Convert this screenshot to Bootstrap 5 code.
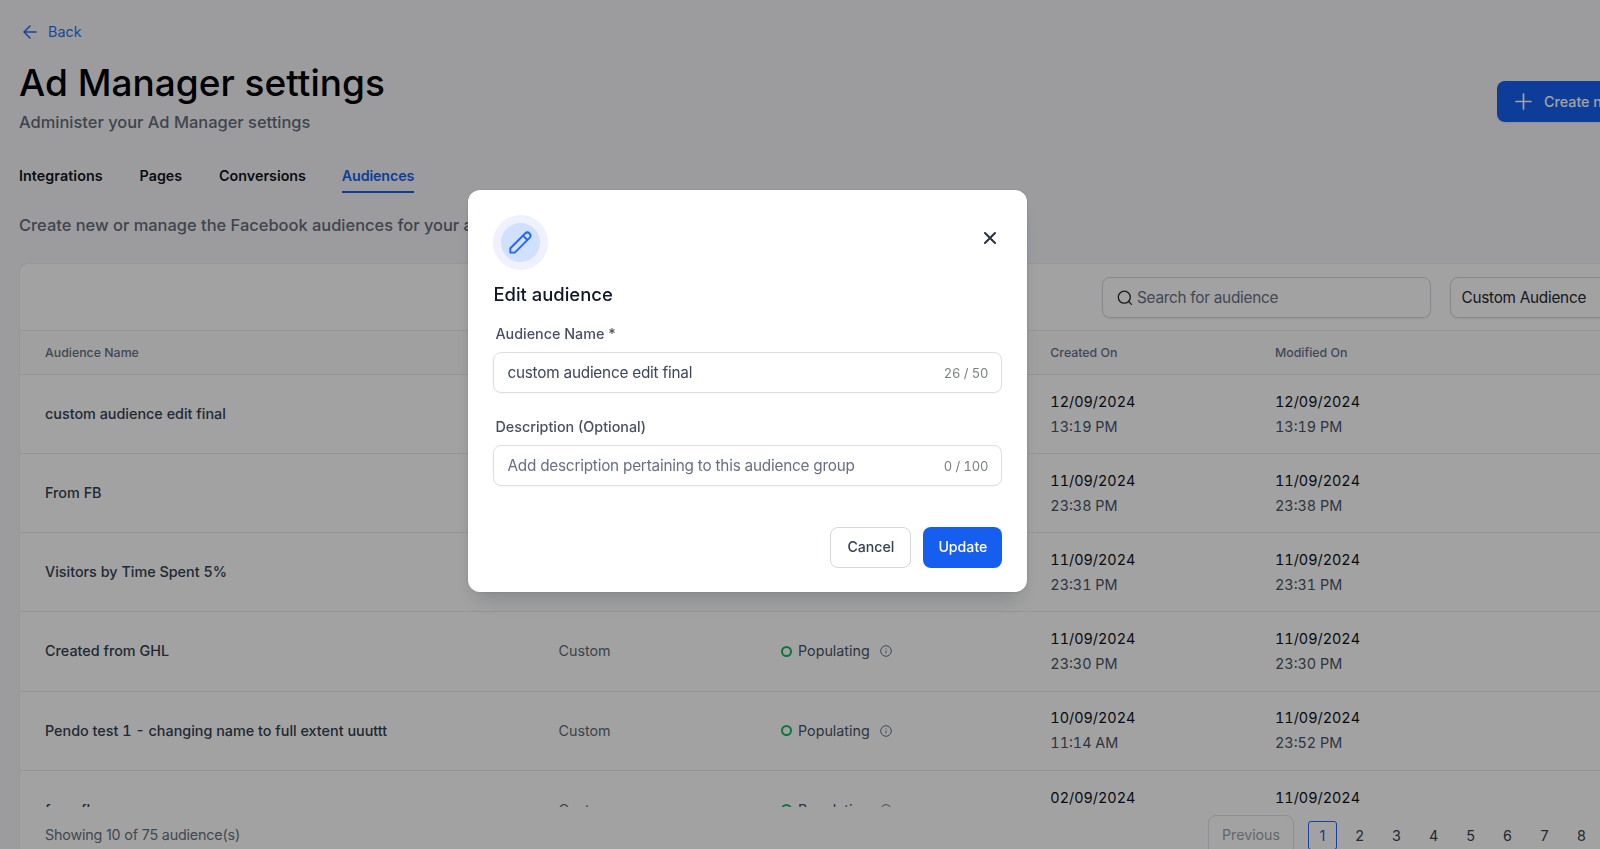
<!DOCTYPE html>
<html lang="en">
<head>
<meta charset="utf-8">
<meta name="viewport" content="width=device-width, initial-scale=1">
<title>Ad Manager settings</title>
<link rel="stylesheet" href="https://cdn.jsdelivr.net/npm/bootstrap@5.3.0/dist/css/bootstrap.min.css">
<style>
  :root { --line: #e9eaec; }
  body { font-family: Inter, "Liberation Sans", sans-serif; font-size: 14.3px; line-height: 20px; background: #f4f5f8; color: #344054; height: 849px; overflow: hidden; }
  .viewport { width: 100%; height: 849px; overflow: hidden; }
  .page { width: 1760px; height: 849px; padding-left: 19px; overflow: hidden; }
  .back-link { font-size: 14.35px; color: #2b6fef; margin-top: 22px; padding-left: 3.5px; gap: 11.5px; }
  .page-title { font-size: 37px; font-weight: 500; line-height: 46px; color: #000; margin: 18px 0 0; }
  .page-sub { font-size: 16.45px; font-weight: 500; line-height: 26px; color: #636b79; margin-top: 3px; }
  .btn-create { background: #155eef; color: #fff; border: 0; border-radius: 8px; height: 41px; padding: 0 18px; gap: 12px; font-size: 14.3px; font-weight: 500; box-shadow: 0 1px 2px rgba(16,24,40,.08); }
  .tab-row { gap: 36.9px; margin-top: 24px; height: 34px; }
  .tab-row .nav-link { padding: 0; height: 34px; line-height: 34px; font-size: 14.3px; font-weight: 600; color: #10151f; }
  .tab-row .nav-link:first-child { letter-spacing: .07px; }
  .tab-row .nav-link.active { color: #155eef; border-bottom: 2px solid #155eef; letter-spacing: -.15px; margin-left: -1px; }
  .intro { margin-top: 19px; }
  .list-card { margin: 26px 0 0 1px; border-radius: 8px 8px 0 0; background: #fefefe; border: 0; height: 600px; box-shadow: 0 0 2px rgba(16,24,40,.14); }
  .filters { height: 67px; padding-left: 1082px; gap: 18.5px; border-bottom: 1px solid var(--line); flex: none; }
  .field { border: 1px solid #d5d7db; border-radius: 8px; height: 41px; background: #fefefe; font-size: 15.3px; letter-spacing: -.25px; padding: 1px 14px 0; box-shadow: 0 1px 2px rgba(16,24,40,.08); }
  .field-search { width: 329px; gap: 4px; color: #667085; }
  .field-select { width: 240px; padding-left: 11px; color: #26282c; }
  .grid-row { display: grid; grid-template-columns: 513.5px 222.5px 269.3px 224.7px 1fr; padding-left: 25px; align-items: center; height: 79.15px; border-bottom: 1px solid var(--line); font-variant-numeric: tabular-nums; }
  .grid-head { height: 44px; font-size: 12.35px; font-weight: 500; color: #667085; background: #fbfbfc; flex: none; }
  .rows { height: 431.5px; overflow: hidden; flex: none; }
  .name { font-weight: 500; font-size: 14.37px; color: #344054; }
  .kind { color: #60697a; }
  .state { color: #475467; gap: 6px; }
  .ring { width: 11px; height: 11px; border: 2.6px solid #16b85c; border-radius: 50%; }
  .stamp { line-height: 24.7px; font-size: 14.4px; color: #475467; padding-top: 1px; }
  .stamp b { display: block; font-weight: 400; color: #0c111b; }
  .foot { padding-left: 25px; height: 60px; flex: none; margin-top: -1.5px; }
  .foot-count { width: 1163px; font-size: 14.3px; letter-spacing: -.17px; color: #667085; }
  .btn-prev { width: 86px; height: 41px; border: 1px solid #e0e2e6; border-radius: 8px; font-size: 14.2px; color: #9aa1ad; padding: 0; box-shadow: 0 1px 2px rgba(16,24,40,.06); background: none; margin-right: 14px; }
  .pg { width: 29px; height: 29px; line-height: 27px; border-radius: 3px; border: 1px solid transparent; margin-right: 8px; padding: 0; background: none; color: #344054; text-align: center; }
  .pg.active { border: 1.5px solid #2466f0; color: #155eef; }
  .shade { position: fixed; inset: 0; background: rgba(0,0,0,.36); }
  .edit-box { position: fixed; left: 468.4px; top: 190px; width: 559px; height: 402.4px; border-radius: 12px; background: #fff; padding: 24.5px 25px; box-shadow: 0 14px 22px -8px rgba(16,24,40,.2), 0 0 3px rgba(0,0,0,.15); }
  .badge-ring { width: 55px; height: 55px; border-radius: 50%; border: 8px solid #eff2fe; background: #d1e0fe; }
  .close-x { margin: 17px 6px 0 0; }
  .edit-title { font-size: 18.45px; font-weight: 500; line-height: 28px; color: #101828; margin: 10px 0 0; }
  .lbl { font-size: 14.35px; font-weight: 500; line-height: 20px; color: #475063; padding-left: 2px; margin-bottom: 8px; }
  .inp { border: 1px solid #dcdee2; border-radius: 8px; height: 41px; padding: 1px 13px 0; font-size: 15.3px; letter-spacing: -.21px; color: #3c4658; box-shadow: 0 1px 2px rgba(16,24,40,.03); }
  .count { font-size: 13px; letter-spacing: -.1px; color: #7d8083; font-variant-numeric: tabular-nums; }
  .btn-box { height: 41px; border-radius: 8px; font-size: 14.15px; font-weight: 500; padding: 0; }
</style>
</head>
<body>
<div class="viewport">
<div class="page">
  <div class="d-flex">
    <div style="width: 1478px">
      <div class="d-flex align-items-center back-link">
        <svg width="14" height="14" viewBox="0 0 14 14" fill="none" stroke="currentColor" stroke-width="1.6" stroke-linecap="round" stroke-linejoin="round"><path d="M13 7H1M7 1 1 7l6 6"/></svg>Back</div>
      <h1 class="page-title">Ad Manager settings</h1>
      <div class="page-sub">Administer your Ad Manager settings</div>
    </div>
    <div class="align-self-end mb-2 pb-1">
      <button class="btn btn-create d-flex align-items-center text-nowrap" style="margin-bottom: 1px">
        <svg width="17" height="17" viewBox="0 0 17 17" fill="none" stroke="currentColor" stroke-width="1.7" stroke-linecap="round"><path d="M8.5 1v15M1 8.5h15"/></svg>Create new audience</button>
    </div>
  </div>
  <nav class="nav tab-row">
    <a class="nav-link">Integrations</a><a class="nav-link">Pages</a><a class="nav-link">Conversions</a><a class="nav-link active">Audiences</a>
  </nav>
  <div class="page-sub intro">Create new or manage the Facebook audiences for your ads</div>

  <div class="card list-card">
    <div class="d-flex align-items-center filters">
      <div class="field field-search d-flex align-items-center">
        <svg width="16" height="16" viewBox="0 0 16 16" fill="none" stroke="#26282c" stroke-width="1.3" stroke-linecap="round"><circle cx="7.3" cy="7.2" r="6"/><path d="m11.6 11.5 2.9 2.9"/></svg>Search for audience</div>
      <div class="field field-select d-flex align-items-center">Custom Audience</div>
    </div>
    <div class="grid-row grid-head"><span>Audience Name</span><span>Type</span><span>Status</span><span>Created On</span><span>Modified On</span></div>
    <div class="rows" id="rows"></div>
    <div class="d-flex align-items-center foot">
      <span class="foot-count">Showing 10 of 75 audience(s)</span>
      <button class="btn btn-prev">Previous</button>
      <span class="pg active">1</span><span class="pg">2</span><span class="pg">3</span><span class="pg">4</span><span class="pg">5</span><span class="pg">6</span><span class="pg">7</span><span class="pg">8</span>
    </div>
  </div>
</div>
</div>

<div class="shade"></div>
<div class="edit-box">
  <div class="d-flex justify-content-between align-items-start">
    <div class="badge-ring d-flex align-items-center justify-content-center">
      <svg width="23" height="23" viewBox="0 0 24 24" fill="none" stroke="#2566f0" stroke-width="2" stroke-linecap="round" stroke-linejoin="round"><path d="M1.4 22.6V18L16.8 2.6a3.25 3.25 0 0 1 4.6 4.6L6 22.6zM14.6 4.8l4.6 4.6"/></svg>
    </div>
    <svg class="close-x" width="12" height="12" viewBox="0 0 12 12" fill="none" stroke="#293245" stroke-width="2" stroke-linecap="round"><path d="m1 1 10 10M11 1 1 11"/></svg>
  </div>
  <div class="edit-title">Edit audience</div>
  <div class="lbl" style="margin-top: 16px">Audience Name *</div>
  <div class="inp d-flex align-items-center justify-content-between"><span>custom audience edit final</span><span class="count">26 / 50</span></div>
  <div class="lbl" style="margin-top: 24px">Description (Optional)</div>
  <div class="inp d-flex align-items-center justify-content-between"><span style="color:#667085">Add description pertaining to this audience group</span><span class="count">0 / 100</span></div>
  <div class="d-flex justify-content-end" style="margin-top: 41px; gap: 12px">
    <button class="btn btn-box" style="width:81px;border:1px solid #d5d7db;color:#344054">Cancel</button>
    <button class="btn btn-box text-white" style="width:79px;background:#155eef;border:0">Update</button>
  </div>
</div>

<script src="https://cdn.jsdelivr.net/npm/bootstrap@5.3.0/dist/js/bootstrap.bundle.min.js"></script>
<script>
  const audiences = [
    ['custom audience edit final', '12/09/2024', '13:19 PM', '12/09/2024', '13:19 PM'],
    ['From FB', '11/09/2024', '23:38 PM', '11/09/2024', '23:38 PM'],
    ['Visitors by Time Spent 5%', '11/09/2024', '23:31 PM', '11/09/2024', '23:31 PM'],
    ['Created from GHL', '11/09/2024', '23:30 PM', '11/09/2024', '23:30 PM'],
    ['Pendo test 1 - changing name to full extent uuuttt', '10/09/2024', '11:14 AM', '11/09/2024', '23:52 PM'],
    ['from fb', '02/09/2024', '', '11/09/2024', '']
  ];
  document.getElementById('rows').innerHTML = audiences.map(a => `
    <div class="grid-row">
      <span class="name">${a[0]}</span>
      <span class="kind">Custom</span>
      <span class="state d-flex align-items-center"><i class="ring"></i>Populating
        <svg class="ms-1" width="12" height="12" viewBox="0 0 12 12" fill="none" stroke="#667085"><circle cx="6" cy="6" r="5.3"/><path d="M6 5.6v2.8M6 3.4v.9"/></svg></span>
      <span class="stamp"><b>${a[1]}</b>${a[2] || '&nbsp;'}</span>
      <span class="stamp"><b>${a[3]}</b>${a[4] || '&nbsp;'}</span>
    </div>`).join('');
</script>
</body>
</html>
